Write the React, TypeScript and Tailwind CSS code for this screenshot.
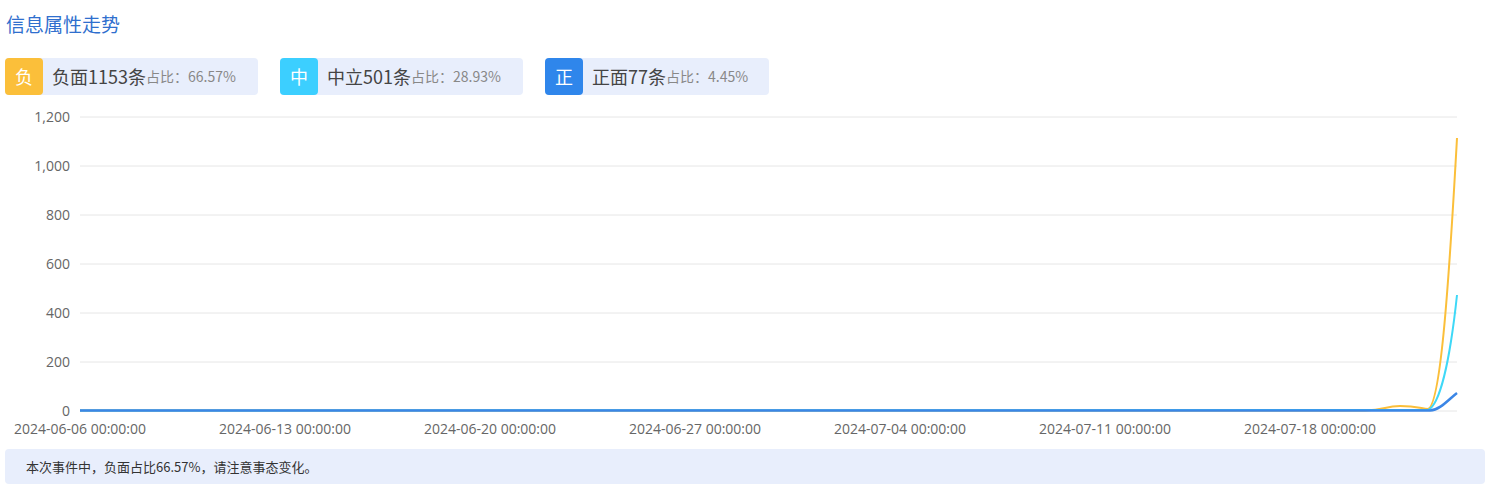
import React from "react";

const font = { fontFamily: '"Noto Sans CJK SC", "Noto Sans", sans-serif' };
const numFont = { fontFamily: '"Open Sans", "Noto Sans CJK SC", sans-serif' };

function Badge({ ch, color, label, pct, w }: { ch: string; color: string; label: string; pct: string; w: string }) {
  return (
    <div className={`flex items-center h-[37px] rounded bg-[#e8eefc] ${w}`}>
      <div className="w-[38px] h-[37px] rounded flex items-center justify-center text-white text-[18px]" style={{ background: color }}>{ch}</div>
      <span className="ml-[9px] text-[18px] text-[#444]">{label}</span>
      <span className="text-[14px] text-[#888]">占比：{pct}</span>
    </div>
  );
}

export default function App() {
  const ys = [1200, 1000, 800, 600, 400, 200, 0];
  const xl = ["2024-06-06", "2024-06-13", "2024-06-20", "2024-06-27", "2024-07-04", "2024-07-11", "2024-07-18"];
  return (
    <div className="w-[1485px] h-[494px] bg-white relative" style={font}>
      <div className="pt-[9px] pl-[6px] text-[19px] text-[#2f6fce] leading-[30px]">信息属性走势</div>
      <div className="flex gap-[22px] pl-[5px] mt-[19px]">
        <Badge ch="负" color="#fbbf3a" label="负面1153条" pct="66.57%" w="w-[253px]" />
        <Badge ch="中" color="#3ccfff" label="中立501条" pct="28.93%" w="w-[243px]" />
        <Badge ch="正" color="#2f86eb" label="正面77条" pct="4.45%" w="w-[224px]" />
      </div>
      <svg width="1485" height="345" viewBox="0 100 1485 345" className="block mt-[5px]">
        {ys.map((v, i) => {
          const y = 117 + i * 49;
          return (
            <g key={v}>
              <line x1="80" x2="1457" y1={y} y2={y} stroke="#e6e6e6" strokeWidth="1" />
              <text x="70" y={y + 5} textAnchor="end" fontSize="14" fill="#666" style={numFont}>{v.toLocaleString("en-US")}</text>
            </g>
          );
        })}
        {xl.map((d, i) => (
          <text key={d} x={80 + i * 205} y={434} textAnchor="middle" fontSize="14" fill="#666" style={numFont}>{d} 00:00:00</text>
        ))}
        <path d="M80 410.5 L1365 410.5 C1385 410 1385 406 1400 406 C1415 406 1420 408 1428 409 C1440 405 1448 300 1457 138" fill="none" stroke="#fbbf3a" strokeWidth="2" />
        <path d="M80 410.5 L1428 410 C1440 405 1450 360 1457 295" fill="none" stroke="#3ed8f7" strokeWidth="2" />
        <path d="M80 410.5 L1430 410.5 C1440 410 1448 400 1457 393" fill="none" stroke="#3b86e6" strokeWidth="2.5" />
      </svg>
      <div className="ml-[5px] mt-[4px] h-[35px] bg-[#e8eefc] rounded flex items-center pl-[21px] text-[13px] text-[#333]">本次事件中，负面占比66.57%，请注意事态变化。</div>
    </div>
  );
}
